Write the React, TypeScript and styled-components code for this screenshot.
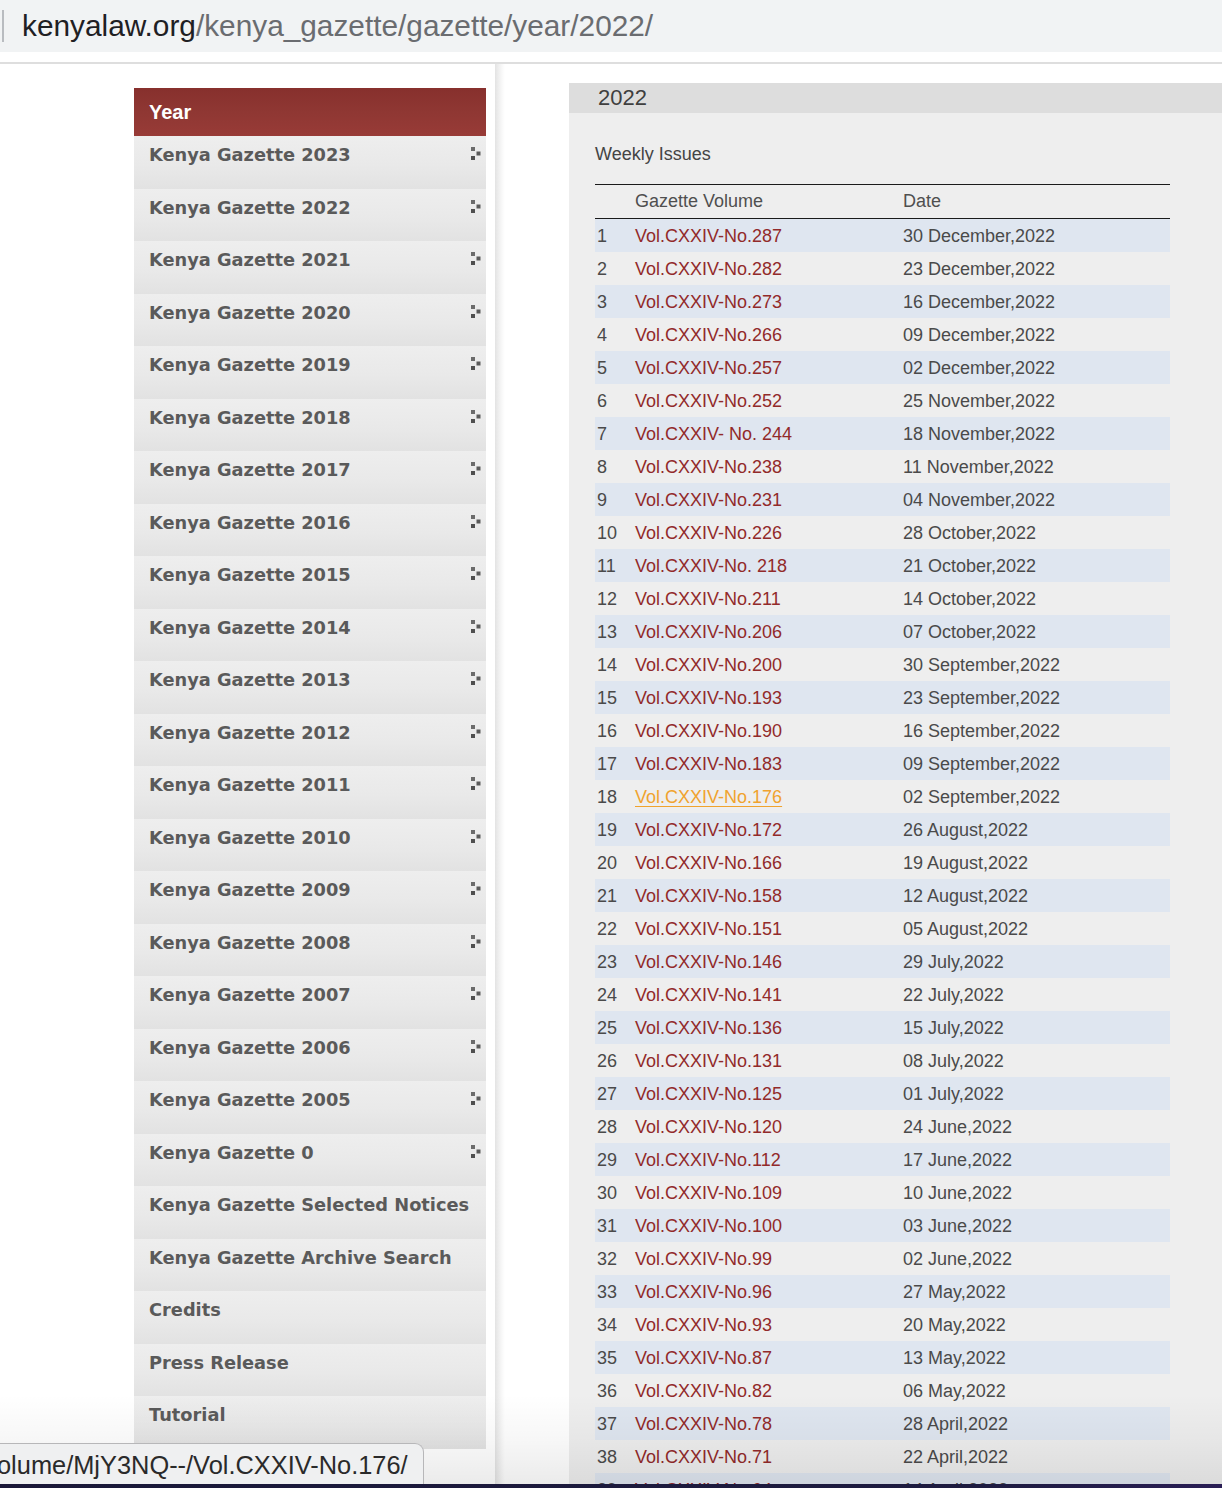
import React from "react";
import styled, { createGlobalStyle } from "styled-components";

const Global = createGlobalStyle`
  html, body { margin: 0; padding: 0; background: #ffffff; overflow: hidden; }
  body { width: 1222px; height: 1488px; font-family: "Liberation Sans", Arial, sans-serif; }
  #root { position: relative; width: 1222px; height: 1488px; overflow: hidden; }
`;

const Frame = styled.div`
  display: flex;
  flex-direction: column;
  width: 1222px;
  height: 1488px;
  overflow: hidden;
`;

const UrlBar = styled.div`
  height: 52px;
  background: #f1f3f4;
  display: flex;
  align-items: center;
  flex-shrink: 0;
`;

const Caret = styled.span`
  width: 2px;
  height: 32px;
  background: #b9bcc0;
  margin-left: 2px;
  margin-right: 18px;
`;

const UrlText = styled.span`
  font-family: "Liberation Sans", Arial, sans-serif;
  font-size: 29.8px;
  color: #6a6c70;
  white-space: nowrap;
`;

const UrlHost = styled.span`
  color: #1f2023;
`;

const UrlGap = styled.div`
  height: 10px;
  border-bottom: 2px solid #dedede;
  flex-shrink: 0;
`;

const Page = styled.div`
  display: flex;
  flex: 1;
  min-height: 0;
`;

const LeftCol = styled.div`
  width: 495px;
  flex-shrink: 0;
  padding: 24px 0 0 134px;
  box-sizing: border-box;
`;

const Divider = styled.div`
  width: 10px;
  flex-shrink: 0;
  background: linear-gradient(90deg, #e3e3e3 0%, #f0f0f0 40%, #fbfbfb 80%, #ffffff 100%);
`;

const Sidebar = styled.nav`
  width: 352px;
  display: flex;
  flex-direction: column;
`;

const SideHeader = styled.div`
  height: 48px;
  box-sizing: border-box;
  padding: 0 15px;
  display: flex;
  align-items: center;
  background: linear-gradient(180deg, #87302d 0%, #8f3733 50%, #983b37 100%);
  color: #ffffff;
  font-family: "Liberation Sans", Arial, sans-serif;
  font-weight: bold;
  font-size: 20px;
`;

const SideItem = styled.a`
  height: 52.5px;
  box-sizing: border-box;
  display: flex;
  justify-content: space-between;
  align-items: flex-start;
  padding: 8px 5px 0 15px;
  background: linear-gradient(180deg, #eeeeee 0%, #e9e9e9 55%, #e2e2e2 100%);
  color: #5a5a5a;
  text-decoration: none;
  font-family: "DejaVu Sans", Verdana, sans-serif;
  font-weight: bold;
  font-size: 17.8px;
  line-height: 22px;
  white-space: nowrap;
`;

const ArrowIcon = styled.svg`
  margin-top: 3px;
  flex-shrink: 0;
`;

const Arrow = () => (
  <ArrowIcon width="10" height="13" viewBox="0 0 10 13">
    <rect x="0" y="0" width="4" height="4" fill="#6b6b6b" />
    <rect x="5.5" y="4.5" width="4" height="4" fill="#5a5a5a" />
    <rect x="0" y="9" width="4" height="4" fill="#4f4f4f" />
  </ArrowIcon>
);

const Main = styled.main`
  flex: 1;
  margin: 19px 0 0 64px;
  background: #eeeeee;
  display: flex;
  flex-direction: column;
`;

const MainHeader = styled.div`
  height: 30px;
  background: #dddddd;
  padding-left: 29px;
  font-size: 22px;
  line-height: 30px;
  color: #3f3f3f;
`;

const MainBody = styled.div`
  padding: 30px 0 0 26px;
`;

const Title = styled.div`
  font-size: 18px;
  line-height: 22px;
  color: #444444;
`;

const Table = styled.table`
  margin-top: 19px;
  width: 575px;
  border-collapse: collapse;
  border-top: 1px solid #1a1a1a;
  font-size: 18px;
  color: #4a4a4a;
`;

const HeadRow = styled.tr`
  height: 34px;
  border-bottom: 1.5px solid #1a1a1a;
`;

const Th = styled.th<{ $w?: number; $pad?: number }>`
  text-align: left;
  font-weight: normal;
  padding: 0 0 0 ${(p) => p.$pad ?? 0}px;
  color: #4f4f4f;
  width: ${(p) => (p.$w ? `${p.$w}px` : "auto")};
  box-sizing: border-box;
`;

const Row = styled.tr<{ $odd: boolean }>`
  height: 33px;
  background: ${(p) => (p.$odd ? "#dfe6f0" : "transparent")};
`;

const Td = styled.td<{ $pad?: number }>`
  padding: 2px 0 0 ${(p) => p.$pad ?? 0}px;
  white-space: nowrap;
  line-height: 31px;
`;

const VolLink = styled.a<{ $hover?: boolean }>`
  color: ${(p) => (p.$hover ? "#f0a32e" : "#922a2a")};
  text-decoration: ${(p) => (p.$hover ? "underline" : "none")};
  text-underline-offset: 3px;
`;

const StatusBar = styled.div`
  position: absolute;
  left: -1px;
  bottom: 2px;
  height: 43px;
  width: 425px;
  box-sizing: border-box;
  background: #eff0f1;
  border: 1px solid #b7b7b9;
  border-bottom: none;
  border-top-right-radius: 9px;
  display: flex;
  align-items: center;
  overflow: hidden;
  font-size: 25.4px;
  color: #2a2a2a;
  white-space: nowrap;
`;

const StatusText = styled.span`
  margin-left: -3px;
`;

const Vignette = styled.div`
  position: absolute;
  left: 0;
  right: 0;
  bottom: 4px;
  height: 90px;
  pointer-events: none;
  background: linear-gradient(180deg, rgba(0, 0, 0, 0) 0%, rgba(0, 0, 0, 0.03) 50%, rgba(0, 0, 0, 0.08) 100%);
`;

const BottomEdge = styled.div`
  position: absolute;
  left: 0;
  right: 0;
  bottom: 0;
  height: 4px;
  background: linear-gradient(90deg, #1a1838 0%, #1d1b40 80%, #2a1e55 100%);
`;

const years = [
  "2023", "2022", "2021", "2020", "2019", "2018", "2017", "2016", "2015", "2014",
  "2013", "2012", "2011", "2010", "2009", "2008", "2007", "2006", "2005", "0",
];
const extras = [
  "Kenya Gazette Selected Notices",
  "Kenya Gazette Archive Search",
  "Credits",
  "Press Release",
  "Tutorial",
];

const issues: [string, string][] = [
  ["Vol.CXXIV-No.287", "30 December,2022"],
  ["Vol.CXXIV-No.282", "23 December,2022"],
  ["Vol.CXXIV-No.273", "16 December,2022"],
  ["Vol.CXXIV-No.266", "09 December,2022"],
  ["Vol.CXXIV-No.257", "02 December,2022"],
  ["Vol.CXXIV-No.252", "25 November,2022"],
  ["Vol.CXXIV- No. 244", "18 November,2022"],
  ["Vol.CXXIV-No.238", "11 November,2022"],
  ["Vol.CXXIV-No.231", "04 November,2022"],
  ["Vol.CXXIV-No.226", "28 October,2022"],
  ["Vol.CXXIV-No. 218", "21 October,2022"],
  ["Vol.CXXIV-No.211", "14 October,2022"],
  ["Vol.CXXIV-No.206", "07 October,2022"],
  ["Vol.CXXIV-No.200", "30 September,2022"],
  ["Vol.CXXIV-No.193", "23 September,2022"],
  ["Vol.CXXIV-No.190", "16 September,2022"],
  ["Vol.CXXIV-No.183", "09 September,2022"],
  ["Vol.CXXIV-No.176", "02 September,2022"],
  ["Vol.CXXIV-No.172", "26 August,2022"],
  ["Vol.CXXIV-No.166", "19 August,2022"],
  ["Vol.CXXIV-No.158", "12 August,2022"],
  ["Vol.CXXIV-No.151", "05 August,2022"],
  ["Vol.CXXIV-No.146", "29 July,2022"],
  ["Vol.CXXIV-No.141", "22 July,2022"],
  ["Vol.CXXIV-No.136", "15 July,2022"],
  ["Vol.CXXIV-No.131", "08 July,2022"],
  ["Vol.CXXIV-No.125", "01 July,2022"],
  ["Vol.CXXIV-No.120", "24 June,2022"],
  ["Vol.CXXIV-No.112", "17 June,2022"],
  ["Vol.CXXIV-No.109", "10 June,2022"],
  ["Vol.CXXIV-No.100", "03 June,2022"],
  ["Vol.CXXIV-No.99", "02 June,2022"],
  ["Vol.CXXIV-No.96", "27 May,2022"],
  ["Vol.CXXIV-No.93", "20 May,2022"],
  ["Vol.CXXIV-No.87", "13 May,2022"],
  ["Vol.CXXIV-No.82", "06 May,2022"],
  ["Vol.CXXIV-No.78", "28 April,2022"],
  ["Vol.CXXIV-No.71", "22 April,2022"],
  ["Vol.CXXIV-No.64", "14 April,2022"],
  ["Vol.CXXIV-No.57", "08 April,2022"],
];

export default function App() {
  return (
    <>
      <Global />
      <Frame>
        <UrlBar>
          <Caret />
          <UrlText>
            <UrlHost>kenyalaw.org</UrlHost>/kenya_gazette/gazette/year/2022/
          </UrlText>
        </UrlBar>
        <UrlGap />
        <Page>
          <LeftCol>
            <Sidebar>
              <SideHeader>Year</SideHeader>
              {years.map((y) => (
                <SideItem key={y} href="#">
                  <span>Kenya Gazette {y}</span>
                  <Arrow />
                </SideItem>
              ))}
              {extras.map((e) => (
                <SideItem key={e} href="#">
                  <span>{e}</span>
                </SideItem>
              ))}
            </Sidebar>
          </LeftCol>
          <Divider />
          <Main>
            <MainHeader>2022</MainHeader>
            <MainBody>
              <Title>Weekly Issues</Title>
              <Table>
                <thead>
                  <HeadRow>
                    <Th $w={40} $pad={2}></Th>
                    <Th $w={268}>Gazette Volume</Th>
                    <Th>Date</Th>
                  </HeadRow>
                </thead>
                <tbody>
                  {issues.map(([vol, date], i) => (
                    <Row key={i} $odd={i % 2 === 0}>
                      <Td $pad={2}>{i + 1}</Td>
                      <Td>
                        <VolLink href="#" $hover={i === 17}>
                          {vol}
                        </VolLink>
                      </Td>
                      <Td>{date}</Td>
                    </Row>
                  ))}
                </tbody>
              </Table>
            </MainBody>
          </Main>
        </Page>
      </Frame>
      <Vignette />
      <StatusBar>
        <StatusText>olume/MjY3NQ--/Vol.CXXIV-No.176/</StatusText>
      </StatusBar>
      <BottomEdge />
    </>
  );
}
